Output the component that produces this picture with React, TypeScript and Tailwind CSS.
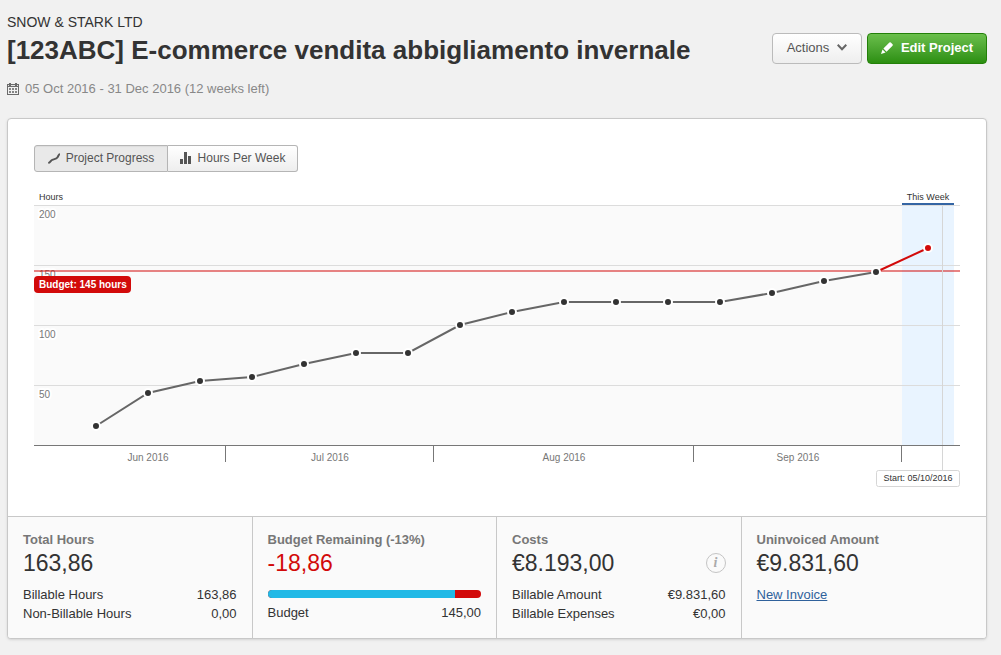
const BASE_Y = 255
const FIRST_X = 62
const WEEK = 52

// height of the line above the baseline, one value per week
const progress = [19, 52, 64, 68, 81, 92, 92, 120, 133, 143, 143, 143, 143, 152, 164, 173]
const current = 197

const gridLines = [
  { label: "200", y: 15 },
  { label: "150", y: 75 },
  { label: "100", y: 135 },
  { label: "50", y: 195 },
]

const months = [
  { label: "Jun 2016", x: 114 },
  { label: "Jul 2016", x: 296 },
  { label: "Aug 2016", x: 530 },
  { label: "Sep 2016", x: 764 },
]

const ticks = [191, 399, 659, 867]

const points = progress.map((value, i) => ({ x: FIRST_X + i * WEEK, y: BASE_Y - value }))
const lastPoint = points[points.length - 1]
const currentPoint = { x: lastPoint.x + WEEK, y: BASE_Y - current }

function CalendarIcon() {
  return (
    <svg className="size-3 shrink-0" viewBox="0 0 12 12" fill="#6b6b6b" shapeRendering="crispEdges" aria-hidden="true">
      <path d="M0 1h2V0h2v1h4V0h2v1h2v11H0zM1 4v7h10V4z" fillRule="evenodd" />
      <path d="M1 2h1v1H1zM4 2h4v1H4zM10 2h1v1h-1z" fill="#e4e4e4" />
      <path d="M2 5h2v2H2zM5 5h2v2H5zM8 5h2v2H8zM2 8h2v2H2zM5 8h2v2H5zM8 8h2v2H8z" fill="#858585" />
    </svg>
  )
}

function PencilIcon() {
  return (
    <svg className="size-3 shrink-0" viewBox="0 0 12 12" fill="#fff" aria-hidden="true">
      <path d="M8.400 .6q.7-.7 1.400 0l1.700 1.700q.7.7 0 1.400L5.500 9.700 2.400 6.600zM1.500 7.500l3.100 3.100L0 12z" />
    </svg>
  )
}

function Chart() {
  return (
    <svg
      className="block w-full font-['Liberation_Sans',Arial,sans-serif]"
      viewBox="0 0 926 300"
      role="img"
      aria-label="Project progress in hours"
    >
      <rect x="0" y="15" width="920" height="240" fill="#fafafa" />
      <rect x="868" y="15" width="52" height="240" fill="#e9f4ff" />
      {gridLines.map(({ label, y }) => (
        <g key={label}>
          <rect x="0" y={y} width="926" height="1" fill="#dcdcdc" />
          <text
            x="5"
            y={y + 13}
            fontSize="10"
            fill="#777"
            stroke="#fff"
            strokeWidth="4"
            strokeLinejoin="round"
            paintOrder="stroke"
          >
            {label}
          </text>
        </g>
      ))}
      <rect x="0" y="80" width="926" height="2" fill="#d20a0a" opacity="0.5" />
      <rect x="908" y="16" width="1" height="264" fill="#d6d6d6" />
      <rect x="868" y="13" width="52" height="2" fill="#3465a4" />
      <rect x="0" y="255" width="926" height="1" fill="#777" />
      {ticks.map((x) => (
        <rect key={x} x={x} y="256" width="1" height="16" fill="#777" />
      ))}

      <polyline
        points={points.map(({ x, y }) => `${x},${y}`).join(" ")}
        fill="none"
        stroke="#666"
        strokeWidth="2"
      />
      <line x1={lastPoint.x} y1={lastPoint.y} x2={currentPoint.x} y2={currentPoint.y} stroke="#d20a0a" strokeWidth="2" />
      {points.map(({ x, y }) => (
        <circle key={x} cx={x} cy={y} r="4" fill="#333" stroke="#fff" strokeWidth="2" />
      ))}
      <circle cx={currentPoint.x} cy={currentPoint.y} r="4" fill="#d20a0a" stroke="#fff" strokeWidth="2" />

      <rect x="0" y="86" width="97" height="17" rx="4" fill="#d20a0a" />
      <text x="5" y="98" fontSize="10" fontWeight="bold" fill="#fff">
        Budget: 145 hours
      </text>
      <text x="5" y="10" fontSize="9" fill="#333">
        Hours
      </text>
      <text x="894" y="10" fontSize="9" fill="#333" textAnchor="middle">
        This Week
      </text>
      {months.map(({ label, x }) => (
        <text key={label} x={x} y="271" fontSize="10" fill="#777" textAnchor="middle">
          {label}
        </text>
      ))}
      <rect x="842.5" y="280.5" width="83" height="16" rx="2" fill="#fff" stroke="#d6d6d6" />
      <text x="884" y="291" fontSize="9" fill="#333" textAnchor="middle">
        Start: 05/10/2016
      </text>
    </svg>
  )
}

function Row({ label, value }: { label: string; value: string }) {
  return (
    <div className="flex justify-between">
      <dt>{label}</dt>
      <dd>{value}</dd>
    </div>
  )
}

export default function App() {
  return (
    <div className="min-h-screen bg-[#f1f1f1] pt-3 pr-3.5 pb-4 pl-[7px] font-['Liberation_Sans',Arial,sans-serif] text-[13px] text-[#333]">
      <header className="flex items-start justify-between">
        <div>
          <p className="text-sm leading-5">SNOW &amp; STARK LTD</p>
          <h1 className="text-[26px] leading-9 font-bold">[123ABC] E-commerce vendita abbigliamento invernale</h1>
          <p className="mt-[11px] flex items-center gap-1.5 leading-5 text-[#888]">
            <CalendarIcon />
            05 Oct 2016 - 31 Dec 2016 (12 weeks left)
          </p>
        </div>
        <div className="mt-[21px] flex gap-[5px]">
          <button
            type="button"
            className="flex h-[31px] w-[90px] cursor-pointer items-center justify-center gap-2 rounded border border-[#bbb] bg-linear-to-b from-white to-[#eee] pb-0.5 text-[#555]"
          >
            Actions
            <svg className="w-2.5" viewBox="0 0 10 7" fill="none" stroke="#666" strokeWidth="2" aria-hidden="true">
              <path d="M.7 .8 5 5.300 9.300 .8" />
            </svg>
          </button>
          <button
            type="button"
            className="flex h-[31px] w-[120px] cursor-pointer items-center justify-center gap-2 rounded border border-[#238009] bg-linear-to-b from-[#6abf4b] to-[#2b8f0f] pb-0.5 font-bold text-white"
          >
            <PencilIcon />
            Edit Project
          </button>
        </div>
      </header>

      <main className="mt-[19px] overflow-hidden rounded border border-[#c8c8c8] bg-white shadow-sm">
        <section className="px-[26px] pt-[26px] pb-[26px]">
          <div className="flex">
            <button
              type="button"
              aria-pressed="true"
              className="flex h-[27px] w-[134px] cursor-pointer items-center justify-center gap-1.5 rounded-l-[3px] border border-[#b5b5b5] bg-[#e9e9e9] pb-0.5 text-xs text-[#555] inset-shadow-xs"
            >
              <svg className="size-3" viewBox="0 0 12 12" fill="none" stroke="#555" strokeWidth="2" aria-hidden="true">
                <path d="M.3 11C2.800 10.200 2.300 8.300 4.800 7.600S8.600 6.700 9.400 5.500 10.400 2.800 11.900 1.800" />
              </svg>
              Project Progress
            </button>
            <button
              type="button"
              aria-pressed="false"
              className="flex h-[27px] w-[130px] cursor-pointer items-center justify-center gap-1.5 rounded-r-[3px] border border-l-0 border-[#b5b5b5] bg-linear-to-b from-white to-[#eee] pb-0.5 text-xs text-[#555]"
            >
              <svg className="size-3" viewBox="0 0 12 12" fill="#555" aria-hidden="true">
                <path d="M0 7h3v5H0zM4 0h3v12H4zM8 4h3v8H8z" />
              </svg>
              Hours Per Week
            </button>
          </div>
          <div className="mt-[18px]">
            <Chart />
          </div>
        </section>

        <section className="grid grid-cols-4 divide-x divide-[#c8c8c8] border-t border-[#c8c8c8] bg-[#fafafa] leading-[19px]">
          <div className="px-[15px] pt-[13px] pb-[15px]">
            <h2 className="font-bold text-[#777]">Total Hours</h2>
            <p className="text-[23px] leading-7">163,86</p>
            <dl className="mt-2">
              <Row label="Billable Hours" value="163,86" />
              <Row label="Non-Billable Hours" value="0,00" />
            </dl>
          </div>
          <div className="px-[15px] pt-[13px] pb-[15px]">
            <h2 className="font-bold text-[#777]">Budget Remaining (-13%)</h2>
            <p className="text-[23px] leading-7 text-[#d20a0a]">-18,86</p>
            <div className="mt-[13px] flex h-2 overflow-hidden rounded-full bg-[#d20a0a]">
              <div className="w-[88%] bg-[#21b9e6]" />
            </div>
            <dl className="mt-[5px]">
              <Row label="Budget" value="145,00" />
            </dl>
          </div>
          <div className="px-[15px] pt-[13px] pb-[15px]">
            <h2 className="font-bold text-[#777]">Costs</h2>
            <div className="flex items-center justify-between">
              <p className="text-[23px] leading-7">€8.193,00</p>
              <button
                type="button"
                aria-label="About costs"
                className="flex size-5 cursor-pointer items-center justify-center rounded-full border border-[#c4c4c4] font-['Liberation_Serif',serif] text-sm font-bold text-[#aaa] italic"
              >
                i
              </button>
            </div>
            <dl className="mt-2">
              <Row label="Billable Amount" value="€9.831,60" />
              <Row label="Billable Expenses" value="€0,00" />
            </dl>
          </div>
          <div className="px-[15px] pt-[13px] pb-[15px]">
            <h2 className="font-bold text-[#777]">Uninvoiced Amount</h2>
            <p className="text-[23px] leading-7">€9.831,60</p>
            <a href="#new-invoice" className="mt-2 inline-block text-[#2f619b] underline">
              New Invoice
            </a>
          </div>
        </section>
      </main>
    </div>
  )
}
